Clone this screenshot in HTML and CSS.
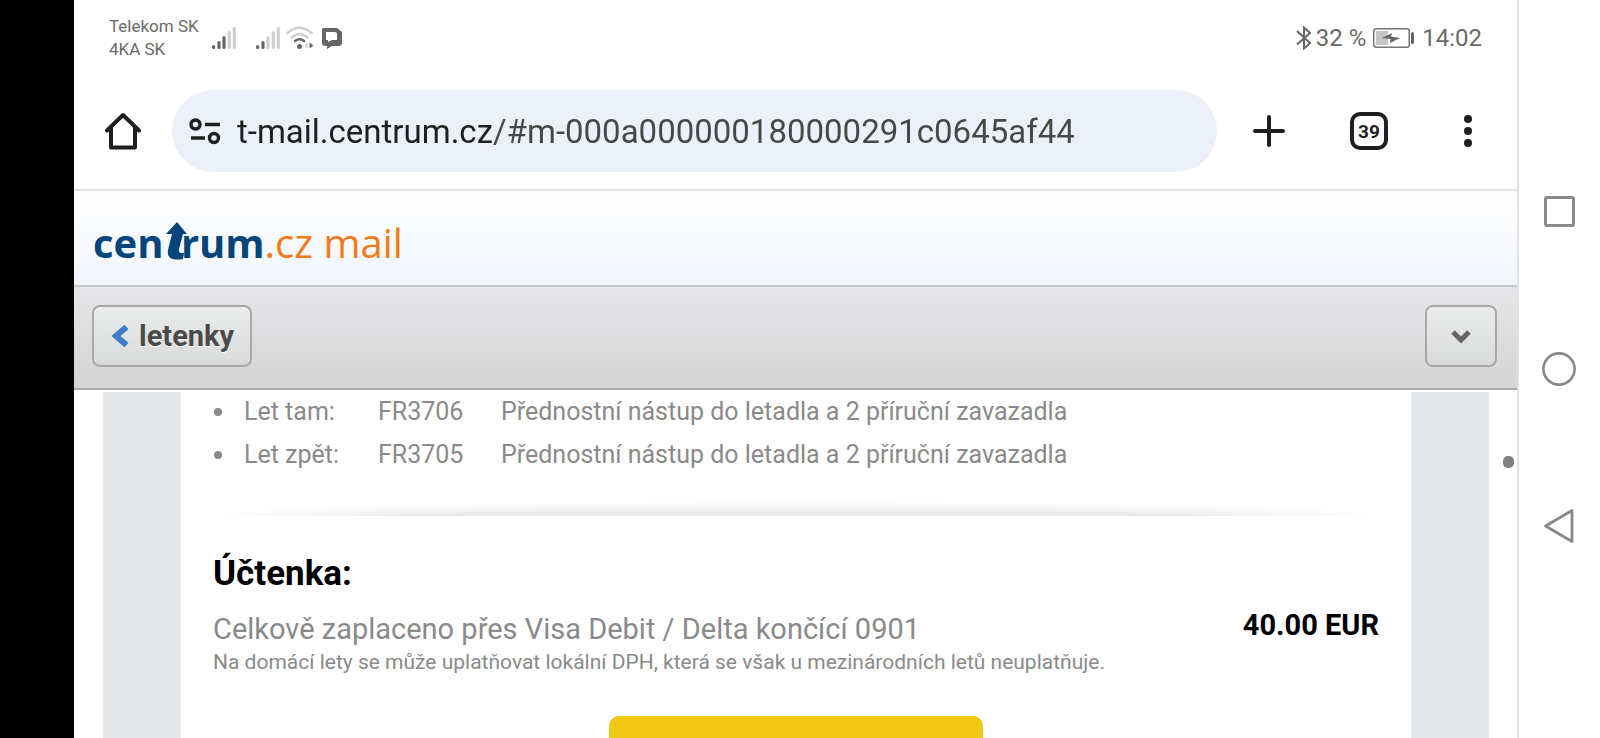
FILE: index.html
```html
<!DOCTYPE html>
<html lang="cs">
<head>
    <meta charset="UTF-8">
    <meta name="viewport" content="width=device-width, initial-scale=1.0">
    <title>centrum.cz mail</title>
    <link rel="stylesheet" href="styles.css">
</head>
<body>
    <div class="cutout"></div>

    <div class="screen">
        <div class="status-bar">
            <div class="carriers">
                <div>Telekom SK</div>
                <div>4KA SK</div>
            </div>
            <svg class="signal" width="24" height="24" viewBox="0 0 24 24" stroke-width="3.200" stroke-linecap="round">
                <path stroke="#666" d="M1.600 20.500v1M7 16.500v5M12 11.500v10"/>
                <path stroke="#cfcfcf" d="M17.300 6.500v15M22.300 2.500v19"/>
            </svg>
            <svg class="signal" width="24" height="24" viewBox="0 0 24 24" stroke-width="3.200" stroke-linecap="round">
                <path stroke="#666" d="M1.600 20.500v1M7 16.500v5"/>
                <path stroke="#cfcfcf" d="M12 11.500v10M17.300 6.500v15M22.300 2.500v19"/>
            </svg>
            <svg class="wifi" width="28" height="24" viewBox="0 0 28 24" fill="none" stroke-width="2.600" stroke-linecap="round">
                <path stroke="#cfcfcf" d="M1.500 7Q13.500 -3.500 25.500 7M5.500 11.500Q13.500 4.500 21.500 11.500"/>
                <path stroke="#666" d="M9 15Q13.500 11.500 18 15"/>
                <circle cx="13.500" cy="20.500" r="2.500" fill="#666"/>
                <path fill="#cfcfcf" d="M21.500 16.500v6l-3-3z"/>
                <path fill="#666" d="M23.500 16.500v6l4-3z"/>
            </svg>
            <svg class="chat" width="22" height="22" viewBox="0 0 22 22">
                <path fill="#666" fill-rule="evenodd" d="M2 1h14l5 4v12l-2 2h-8l-5 3v-3H3l-2-2V2zM5 5v8h2v2l4-2h5V6l-2-1z"/>
            </svg>
            <div class="status-right">
                <svg width="16" height="24" viewBox="0 0 16 24" fill="none" stroke="#666" stroke-width="2">
                    <path d="M1 5l13 12-6 5.500V1.500L14 7 1 18.500"/>
                </svg>
                <span class="percent">32 %</span>
                <svg width="42" height="20" viewBox="0 0 42 20">
                    <rect x=".75" y=".75" width="35.500" height="18.500" rx="2.500" fill="#fff" stroke="#777" stroke-width="1.500"/>
                    <rect x="3" y="3" width="12" height="14" fill="#c6c6c6"/>
                    <path fill="#666" d="M9 10L19 5l-1 3.500 9 1.500-10 5 .500-4z"/>
                    <rect x="38" y="4" width="3" height="12" rx="1.500" fill="#666"/>
                </svg>
                <span class="clock">14:02</span>
            </div>
        </div>

        <div class="browser-bar">
            <button class="icon-btn" type="button" aria-label="Domů">
                <svg width="38" height="38" viewBox="0 0 38 38" fill="none" stroke="#1f1f1f" stroke-width="4" stroke-linecap="round" stroke-linejoin="round">
                    <path d="M3 18.500L19 3l16 15.500M7 16v19.500h24V16"/>
                </svg>
            </button>
            <form class="omnibox">
                <svg width="32" height="28" viewBox="0 0 32 28" fill="none" stroke="#1f1f1f" stroke-width="3.400">
                    <circle cx="6.500" cy="7.500" r="4.500"/>
                    <path d="M16 7.500h15M2 21h14"/>
                    <circle cx="25" cy="21" r="4.500"/>
                </svg>
                <input class="url" type="text" aria-label="Adresa" value="t-mail.centrum.cz/#m-000a000000180000291c0645af44">
            </form>
            <div class="browser-actions">
                <button class="icon-btn" type="button" aria-label="Nová karta">
                    <svg width="38" height="38" viewBox="0 0 38 38" stroke="#1f1f1f" stroke-width="4" stroke-linecap="round">
                        <path d="M18 5v28M4 19h28"/>
                    </svg>
                </button>
                <button class="tabs-btn" type="button">39</button>
                <button class="icon-btn" type="button" aria-label="Nabídka">
                    <svg width="38" height="38" viewBox="0 0 38 38" fill="#1f1f1f">
                        <circle cx="19" cy="7" r="4"/>
                        <circle cx="19" cy="19" r="4"/>
                        <circle cx="19" cy="31" r="4"/>
                    </svg>
                </button>
            </div>
        </div>

        <header class="site-header">
            <a class="logo" href="#"><b>cen<span class="logo-t">t<svg width="24" height="38" viewBox="0 0 24 38"><path fill="#00457c" d="M13 0l10 12h-4l-4 15q-1 5 5 4l-1 6q-17 3-15-9l4-16H2z"/></svg></span>rum</b>.cz mail</a>
        </header>

        <nav class="toolbar">
            <button class="tool-btn back" type="button">
                <svg width="18" height="24" viewBox="0 0 18 24" fill="none" stroke="#3d7cc9" stroke-width="6">
                    <path d="M15.500 3L5 12l10.500 9"/>
                </svg>
                letenky
            </button>
            <button class="tool-btn more" type="button" aria-label="Další">
                <svg width="20" height="16" viewBox="0 0 20 16" fill="none" stroke="#666" stroke-width="5">
                    <path d="M2 4l8 8 8-8"/>
                </svg>
            </button>
        </nav>

        <main class="mail">
            <div class="mail-body">
                <ul class="flights">
                    <li><span>Let tam:</span><span>FR3706</span><span>Přednostní nástup do letadla a 2 příruční zavazadla</span></li>
                    <li><span>Let zpět:</span><span>FR3705</span><span>Přednostní nástup do letadla a 2 příruční zavazadla</span></li>
                </ul>
                <div class="divider"></div>
                <h2>Účtenka:</h2>
                <div class="receipt">
                    <div>
                        <p class="paid">Celkově zaplaceno přes Visa Debit / Delta končící 0901</p>
                        <p class="note">Na domácí lety se může uplatňovat lokální DPH, která se však u mezinárodních letů neuplatňuje.</p>
                    </div>
                    <strong class="total">40.00 EUR</strong>
                </div>
                <a class="cta" href="#" aria-label="Rezervace"></a>
            </div>
            <div class="scroll-thumb"></div>
        </main>
    </div>

    <div class="system-nav">
        <button class="icon-btn" type="button" aria-label="Poslední aplikace">
            <svg width="36" height="36" viewBox="0 0 36 36" fill="none" stroke="#888" stroke-width="3">
                <rect x="4.500" y="3.500" width="28" height="28" rx="1.500"/>
            </svg>
        </button>
        <button class="icon-btn" type="button" aria-label="Plocha">
            <svg width="36" height="36" viewBox="0 0 36 36" fill="none" stroke="#888" stroke-width="2.600">
                <circle cx="18" cy="18" r="15.600"/>
            </svg>
        </button>
        <button class="icon-btn" type="button" aria-label="Zpět">
            <svg width="36" height="36" viewBox="0 0 36 36" fill="none" stroke="#888" stroke-width="2.800" stroke-linejoin="round">
                <path d="M4.500 18L31 2.500v31z"/>
            </svg>
        </button>
    </div>
</body>
</html>
```

FILE: styles.css
```css
* {
    box-sizing: border-box;
}
body {
    margin: 0;
    height: 100vh;
    display: flex;
    overflow: hidden;
    background-color: #ffffff;
    font-family: Roboto, "Liberation Sans", sans-serif;
}
button {
    font-family: inherit;
    cursor: pointer;
}
svg {
    display: block;
    flex-shrink: 0;
}
.cutout {
    width: 74px;
    flex-shrink: 0;
    background-color: #000000;
}
.screen {
    flex: 1;
    min-width: 0;
    display: flex;
    flex-direction: column;
}
.icon-btn {
    padding: 0;
    border: none;
    background: none;
}

/* status bar */
.status-bar {
    height: 76px;
    padding: 0 35px;
    display: flex;
    align-items: center;
    color: #6a6a6a;
}
.carriers {
    width: 103px;
    font-size: 17px;
    line-height: 23px;
}
.signal {
    margin-right: 20px;
}
.wifi {
    margin-left: -14px;
}
.chat {
    margin-left: 7px;
}
.status-right {
    margin-left: auto;
    display: flex;
    align-items: center;
    font-size: 24px;
}
.percent {
    margin: 0 7px 0 4px;
}
.clock {
    margin-left: 7px;
}

/* browser bar */
.browser-bar {
    display: flex;
    align-items: center;
    padding: 14px 30px 17px;
    border-bottom: 2px solid #e2e2e2;
}
.omnibox {
    flex: 1;
    height: 82px;
    margin: 0 34px 0 30px;
    padding: 0 17px;
    display: flex;
    align-items: center;
    gap: 16px;
    border-radius: 41px;
    background-color: #ebf0f9;
}
.url {
    flex: 1;
    min-width: 0;
    height: 44px;
    padding: 0;
    border: none;
    outline: none;
    font-family: inherit;
    font-size: 33px;
    color: #1f1f1f;
    background: linear-gradient(90deg, #1f1f1f 254px, #474747 254px);
    -webkit-background-clip: text;
    background-clip: text;
    -webkit-text-fill-color: transparent;
}
.browser-actions {
    display: flex;
    gap: 61px;
}
.tabs-btn {
    width: 38px;
    height: 38px;
    padding: 0;
    border: 4px solid #1f1f1f;
    border-radius: 10px;
    background: none;
    font-size: 19px;
    font-weight: bold;
    color: #1f1f1f;
}

/* site header */
.site-header {
    height: 96px;
    padding: 10px 19px 0;
    display: flex;
    align-items: center;
    border-bottom: 2px solid #c4c6c8;
    background: linear-gradient(#ffffff, #f1f5fb);
}
.logo {
    font-family: "Open Sans", "Noto Sans", sans-serif;
    font-size: 40px;
    line-height: 60px;
    color: #ef7b1a;
    text-decoration: none;
}
.logo b {
    color: #00457c;
}
.logo .logo-t {
    position: relative;
    color: transparent;
}
.logo-t svg {
    position: absolute;
    left: 0;
    bottom: 10px;
}

/* toolbar */
.toolbar {
    display: flex;
    justify-content: space-between;
    padding: 18px 20px 21px 18px;
    border-bottom: 2px solid #ababab;
    background: linear-gradient(#e5e6e9, #d4d4d4);
}
.tool-btn {
    height: 62px;
    display: flex;
    align-items: center;
    justify-content: center;
    border: 2px solid #a8a8a8;
    border-radius: 8px;
    background: linear-gradient(#eaecec, #d9dadb);
    font-size: 29px;
    font-weight: bold;
    color: #4a4a4a;
    text-shadow: 0 1px 0 #ffffff;
}
.back {
    gap: 10px;
    padding: 0 16px 0 17px;
}
.more {
    width: 72px;
    padding: 0;
}

/* mail */
.mail {
    position: relative;
    flex: 1;
    min-height: 0;
    margin-top: 2px;
    padding: 0 28px 0 29px;
}
.mail-body {
    height: 100%;
    padding: 0 32px;
    border: solid #e5e9ec;
    border-width: 0 78px;
    color: #8a8a8a;
    overflow: hidden;
}
.flights {
    margin: 0;
    padding: 0;
    list-style: none;
    font-size: 25px;
    line-height: 40px;
}
.flights li {
    display: grid;
    grid-template-columns: 31px 134px 123px 1fr;
    align-items: center;
    margin-bottom: 3px;
}
.flights li::before {
    content: "";
    width: 8px;
    height: 8px;
    margin-left: 1px;
    border-radius: 50%;
    background-color: #8a8a8a;
}
.divider {
    height: 16px;
    margin-top: 25px;
    background: radial-gradient(50% 100% at 50% 100%, transparent 60%, #ffffff 100%), linear-gradient(#ffffff, #e8e8e8);
}
h2 {
    margin: 36px 0 0;
    font-size: 35px;
    line-height: 44px;
    color: #000000;
}
.receipt {
    display: flex;
    justify-content: space-between;
    margin-top: 14px;
}
.receipt p {
    margin: 0;
}
.paid {
    font-size: 29px;
    line-height: 38px;
}
.note {
    font-size: 21px;
    line-height: 28px;
}
.total {
    font-size: 29px;
    line-height: 30px;
    color: #000000;
}
.cta {
    display: block;
    width: 32%;
    height: 70px;
    margin: 40px auto 0;
    border-radius: 10px;
    background-color: #f1c814;
}
.scroll-thumb {
    position: absolute;
    top: 64px;
    right: 3px;
    width: 11px;
    height: 12px;
    border-radius: 5px;
    background-color: #808080;
}

/* system navigation */
.system-nav {
    width: 83px;
    flex-shrink: 0;
    display: flex;
    flex-direction: column;
    align-items: center;
    justify-content: center;
    gap: 121px;
    padding-right: 2px;
    border-left: 2px solid #e2e2e2;
}
```
